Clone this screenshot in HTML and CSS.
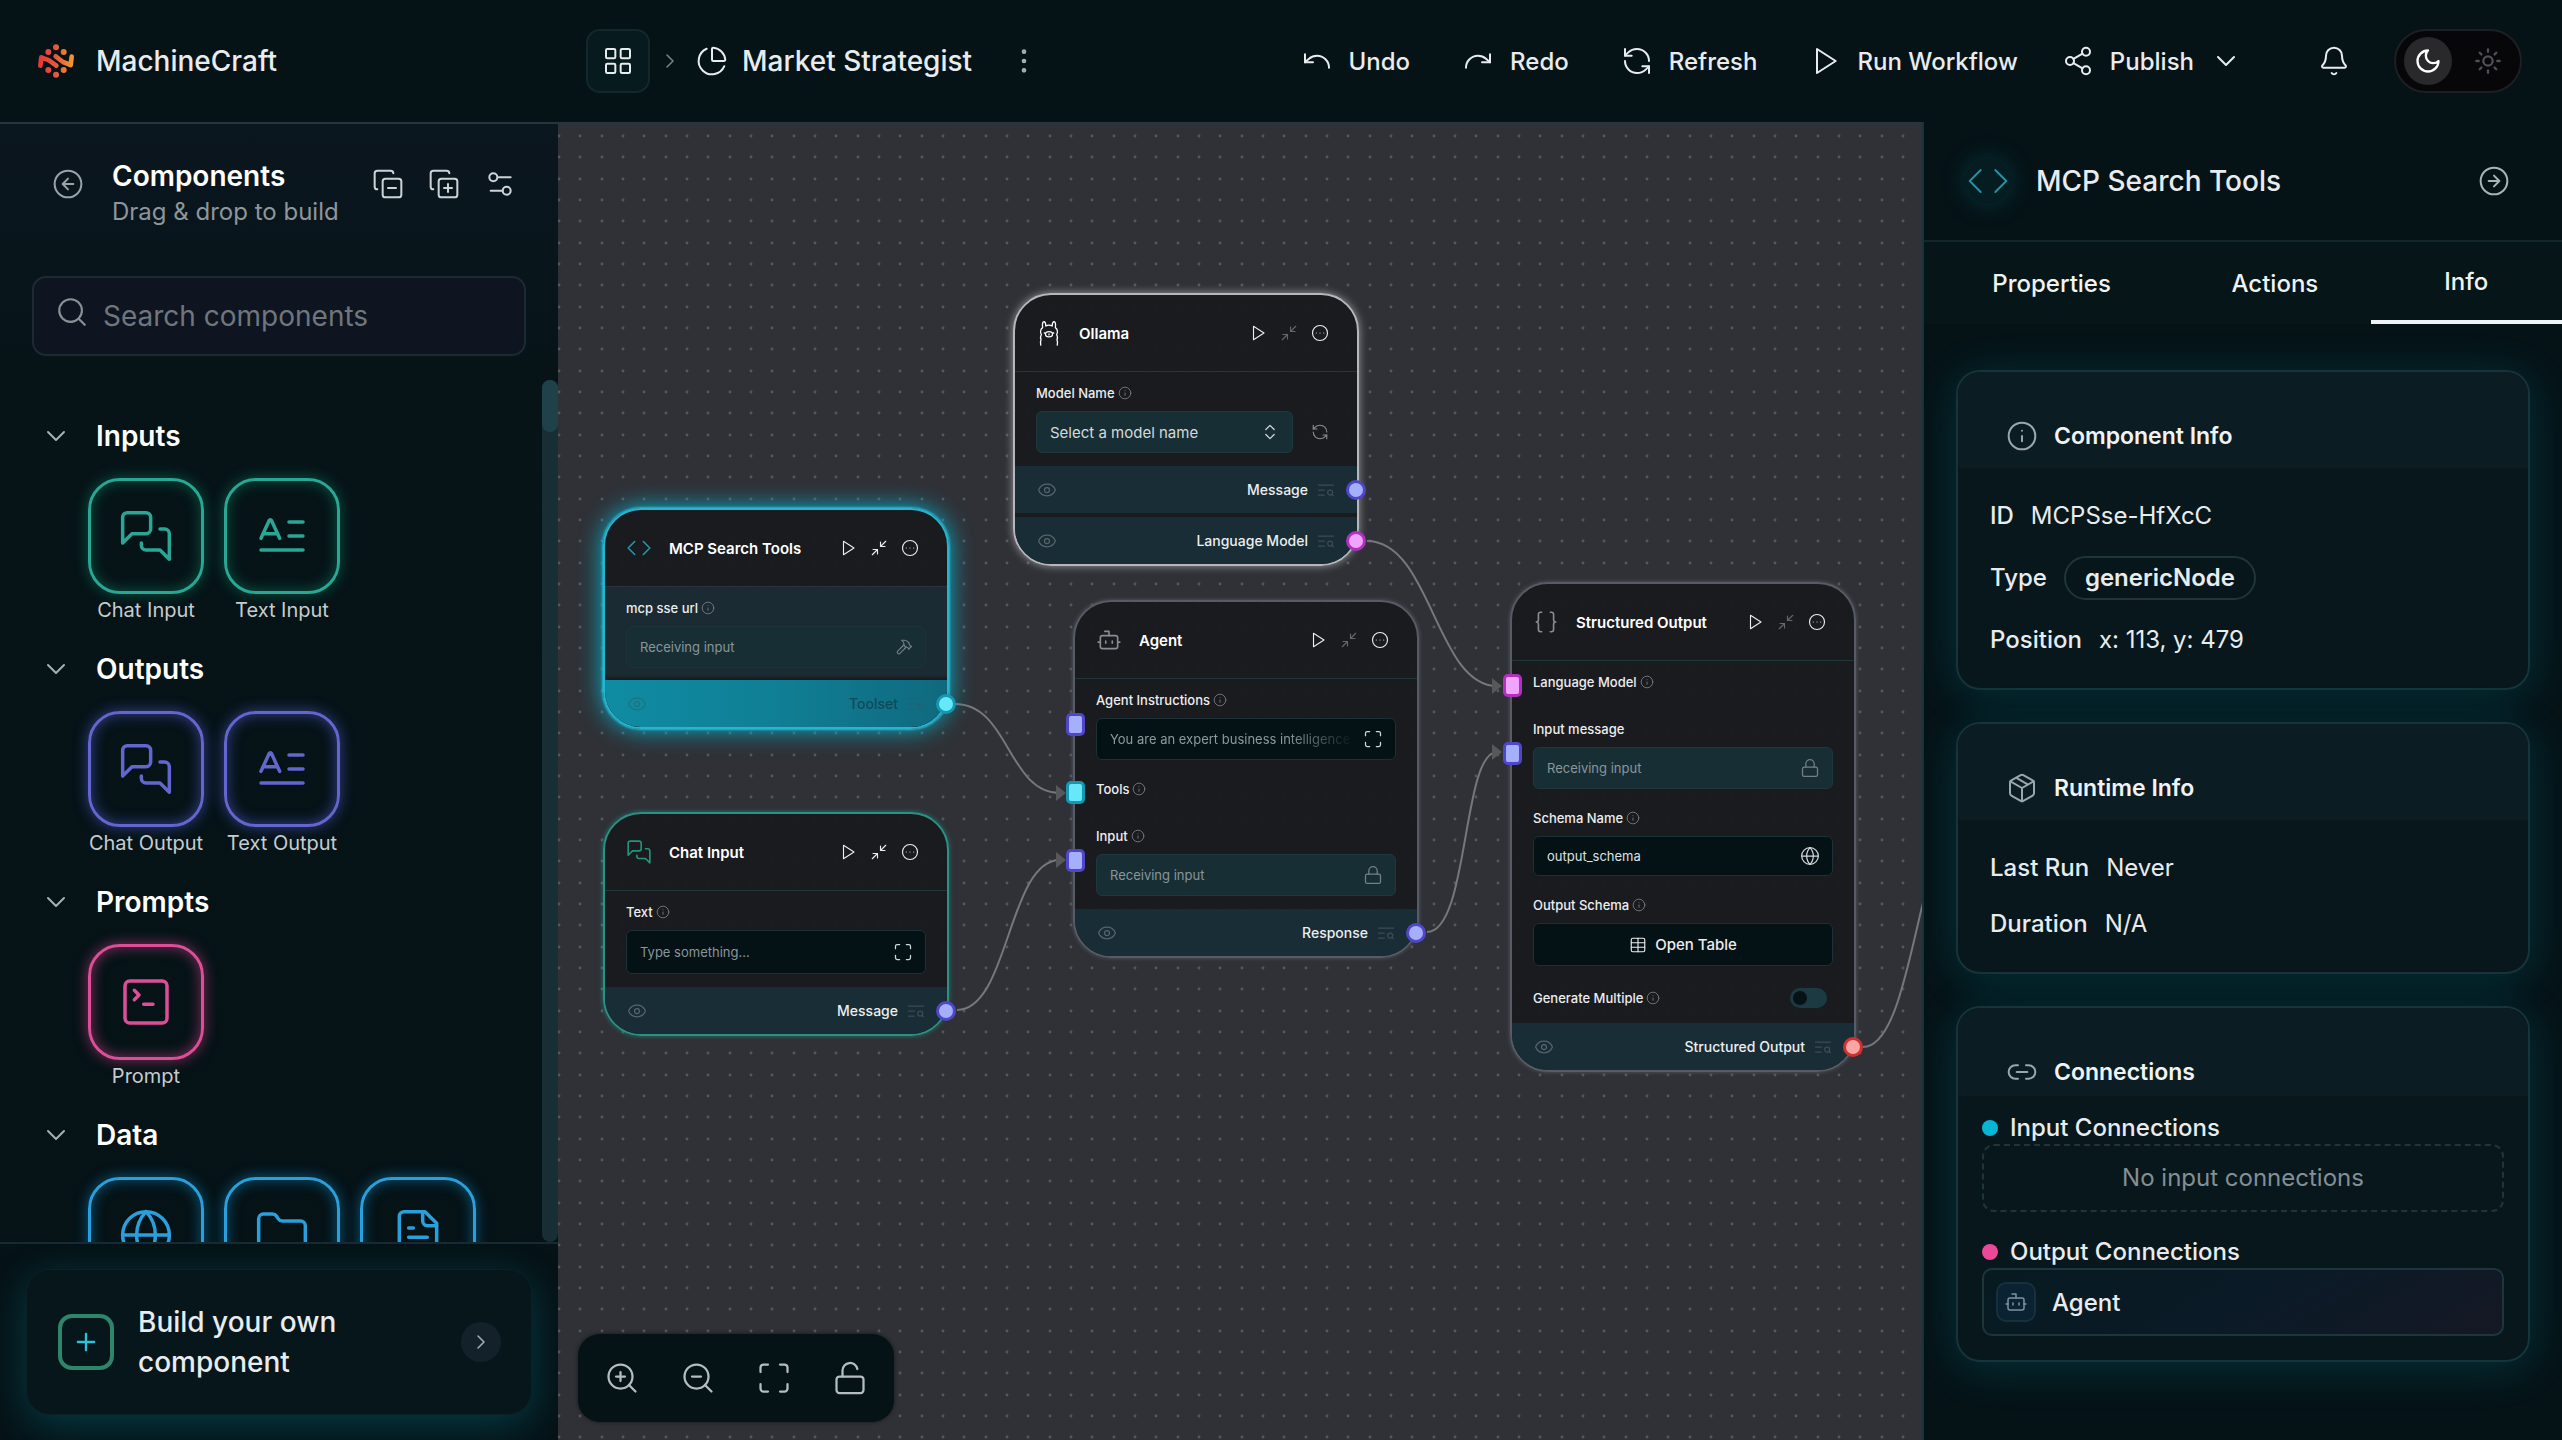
FILE: index.html
```html
<!DOCTYPE html>
<html lang="en">
<head>
<meta charset="utf-8">
<meta name="viewport" content="width=device-width, initial-scale=1">
<title>MachineCraft – Market Strategist</title>
<link rel="stylesheet" href="styles.css">
</head>
<body>
<svg class="sprite" aria-hidden="true">
  <symbol id="grid" viewBox="0 0 24 24"><rect x="3" y="3" width="7" height="7" rx="1"/><rect x="14" y="3" width="7" height="7" rx="1"/><rect x="14" y="14" width="7" height="7" rx="1"/><rect x="3" y="14" width="7" height="7" rx="1"/></symbol>
  <symbol id="chev-right" viewBox="0 0 24 24"><path d="m9 18 6-6-6-6"/></symbol>
  <symbol id="chev-down" viewBox="0 0 24 24"><path d="m6 9 6 6 6-6"/></symbol>
  <symbol id="pie" viewBox="0 0 24 24"><path d="M21 12c.552 0 1.005-.449.95-.998a10 10 0 0 0-8.953-8.951c-.55-.055-.998.398-.998.95v8a1 1 0 0 0 1 1z"/><path d="M21.21 15.89A10 10 0 1 1 8 2.83"/></symbol>
  <symbol id="dots-v" viewBox="0 0 24 24"><circle cx="12" cy="12" r="1"/><circle cx="12" cy="5" r="1"/><circle cx="12" cy="19" r="1"/></symbol>
  <symbol id="undo" viewBox="0 0 24 24"><path d="M3 7v6h6"/><path d="M21 17a9 9 0 0 0-9-9 9 9 0 0 0-6 2.3L3 13"/></symbol>
  <symbol id="redo" viewBox="0 0 24 24"><path d="M21 7v6h-6"/><path d="M3 17a9 9 0 0 1 9-9 9 9 0 0 1 6 2.3l3 2.7"/></symbol>
  <symbol id="refresh" viewBox="0 0 24 24"><path d="M21 12a9 9 0 0 0-9-9 9.75 9.75 0 0 0-6.74 2.74L3 8"/><path d="M3 3v5h5"/><path d="M3 12a9 9 0 0 0 9 9 9.75 9.75 0 0 0 6.74-2.74L21 16"/><path d="M16 16h5v5"/></symbol>
  <symbol id="play" viewBox="0 0 24 24"><path d="M6 3l14 9-14 9z"/></symbol>
  <symbol id="share" viewBox="0 0 24 24"><circle cx="18" cy="5" r="3"/><circle cx="6" cy="12" r="3"/><circle cx="18" cy="19" r="3"/><path d="M8.59 13.51l6.83 3.98M15.41 6.51l-6.82 3.98"/></symbol>
  <symbol id="bell" viewBox="0 0 24 24"><path d="M10.268 21a2 2 0 0 0 3.464 0"/><path d="M3.262 15.326A1 1 0 0 0 4 17h16a1 1 0 0 0 .74-1.673C19.41 13.956 18 12.499 18 8A6 6 0 0 0 6 8c0 4.499-1.411 5.956-2.738 7.326"/></symbol>
  <symbol id="moon" viewBox="0 0 24 24"><path d="M12 3a6 6 0 0 0 9 9 9 9 0 1 1-9-9Z"/></symbol>
  <symbol id="sun" viewBox="0 0 24 24"><circle cx="12" cy="12" r="4"/><path d="M12 2v2M12 20v2M4.93 4.93l1.41 1.41M17.66 17.66l1.41 1.41M2 12h2M20 12h2M6.34 17.66l-1.41 1.41M19.07 4.93l-1.41 1.41"/></symbol>
  <symbol id="circle-left" viewBox="0 0 24 24"><circle cx="12" cy="12" r="10"/><path d="M16 12H8M12 8l-4 4 4 4"/></symbol>
  <symbol id="circle-right" viewBox="0 0 24 24"><circle cx="12" cy="12" r="10"/><path d="M8 12h8M12 16l4-4-4-4"/></symbol>
  <symbol id="copy-minus" viewBox="0 0 24 24"><path d="M12 15h6"/><rect x="8" y="8" width="14" height="14" rx="2"/><path d="M4 16c-1.1 0-2-.9-2-2V4c0-1.1.9-2 2-2h10c1.1 0 2 .9 2 2"/></symbol>
  <symbol id="copy-plus" viewBox="0 0 24 24"><path d="M12 15h6M15 12v6"/><rect x="8" y="8" width="14" height="14" rx="2"/><path d="M4 16c-1.1 0-2-.9-2-2V4c0-1.1.9-2 2-2h10c1.1 0 2 .9 2 2"/></symbol>
  <symbol id="settings" viewBox="0 0 24 24"><path d="M20 7h-9M14 17H5"/><circle cx="17" cy="17" r="3"/><circle cx="7" cy="7" r="3"/></symbol>
  <symbol id="search" viewBox="0 0 24 24"><circle cx="11" cy="11" r="8"/><path d="m21 21-4.3-4.3"/></symbol>
  <symbol id="chat" viewBox="0 0 24 24"><path d="M14 9a2 2 0 0 1-2 2H6l-4 4V4a2 2 0 0 1 2-2h8a2 2 0 0 1 2 2z"/><path d="M18 9h2a2 2 0 0 1 2 2v11l-4-4h-6a2 2 0 0 1-2-2v-1"/></symbol>
  <symbol id="text" viewBox="0 0 24 24"><path d="M15 12h6M15 6h6"/><path d="m3 13 3.553-7.724a.5.5 0 0 1 .894 0L11 13"/><path d="M3 18h18M4 11h6"/></symbol>
  <symbol id="terminal" viewBox="0 0 24 24"><path d="m7 11 2-2-2-2M11 13h4"/><rect x="3" y="3" width="18" height="18" rx="2"/></symbol>
  <symbol id="globe" viewBox="0 0 24 24"><circle cx="12" cy="12" r="10"/><path d="M12 2a14.5 14.5 0 0 0 0 20 14.5 14.5 0 0 0 0-20M2 12h20"/></symbol>
  <symbol id="folder" viewBox="0 0 24 24"><path d="M20 20a2 2 0 0 0 2-2V8a2 2 0 0 0-2-2h-7.9a2 2 0 0 1-1.69-.9L9.6 3.9A2 2 0 0 0 7.93 3H4a2 2 0 0 0-2 2v13a2 2 0 0 0 2 2Z"/></symbol>
  <symbol id="file" viewBox="0 0 24 24"><path d="M15 2H6a2 2 0 0 0-2 2v16a2 2 0 0 0 2 2h12a2 2 0 0 0 2-2V7Z"/><path d="M14 2v4a2 2 0 0 0 2 2h4M10 9H8M16 13H8M16 17H8"/></symbol>
  <symbol id="plus" viewBox="0 0 24 24"><path d="M5 12h14M12 5v14"/></symbol>
  <symbol id="code" viewBox="0 0 24 24"><path d="m16 18 6-6-6-6M8 6l-6 6 6 6"/></symbol>
  <symbol id="shrink" viewBox="0 0 24 24"><path d="M4 14h6v6M20 10h-6V4M14 10l7-7M3 21l7-7"/></symbol>
  <symbol id="more" viewBox="0 0 24 24"><circle cx="12" cy="12" r="10"/><path d="M17 12h.01M12 12h.01M7 12h.01"/></symbol>
  <symbol id="info" viewBox="0 0 24 24"><circle cx="12" cy="12" r="10"/><path d="M12 16v-4M12 8h.01"/></symbol>
  <symbol id="corners" viewBox="0 0 24 24"><path d="M8 3H5a2 2 0 0 0-2 2v3M21 8V5a2 2 0 0 0-2-2h-3M3 16v3a2 2 0 0 0 2 2h3M16 21h3a2 2 0 0 0 2-2v-3"/></symbol>
  <symbol id="zoom-in" viewBox="0 0 24 24"><circle cx="11" cy="11" r="8"/><path d="m21 21-4.35-4.35M11 8v6M8 11h6"/></symbol>
  <symbol id="zoom-out" viewBox="0 0 24 24"><circle cx="11" cy="11" r="8"/><path d="m21 21-4.35-4.35M8 11h6"/></symbol>
  <symbol id="unlock" viewBox="0 0 24 24"><rect x="3" y="11" width="18" height="11" rx="2"/><path d="M7 11V7a5 5 0 0 1 9.9-1"/></symbol>
  <symbol id="lock" viewBox="0 0 24 24"><rect x="3" y="11" width="18" height="11" rx="2"/><path d="M7 11V7a5 5 0 0 1 10 0v4"/></symbol>
  <symbol id="hammer" viewBox="0 0 24 24"><path d="m15 12-8.373 8.373a1 1 0 1 1-3-3L12 9"/><path d="m18 15 4-4"/><path d="m21.5 11.5-1.914-1.914A2 2 0 0 1 19 8.172V7l-2.26-2.26a6 6 0 0 0-4.202-1.756L9 2.96l.92.82A6.18 6.18 0 0 1 12 8.4V10l2 2h1.172a2 2 0 0 1 1.414.586L18.5 14.5"/></symbol>
  <symbol id="eye" viewBox="0 0 24 24"><path d="M2.062 12.348a1 1 0 0 1 0-.696 10.75 10.75 0 0 1 19.876 0 1 1 0 0 1 0 .696 10.75 10.75 0 0 1-19.876 0"/><circle cx="12" cy="12" r="3"/></symbol>
  <symbol id="inspect" viewBox="0 0 24 24"><path d="M21 6H3M10 12H3M10 18H3"/><circle cx="17" cy="15" r="3"/><path d="m21 19-1.9-1.9"/></symbol>
  <symbol id="bot" viewBox="0 0 24 24"><path d="M12 8V4H8"/><rect x="4" y="8" width="16" height="12" rx="2"/><path d="M2 14h2M20 14h2M15 13v2M9 13v2"/></symbol>
  <symbol id="braces" viewBox="0 0 24 24"><path d="M8 3H7a2 2 0 0 0-2 2v5a2 2 0 0 1-2 2 2 2 0 0 1 2 2v5c0 1.1.9 2 2 2h1"/><path d="M16 21h1a2 2 0 0 0 2-2v-5c0-1.1.9-2 2-2a2 2 0 0 1-2-2V5a2 2 0 0 0-2-2h-1"/></symbol>
  <symbol id="updown" viewBox="0 0 24 24"><path d="m7 15 5 5 5-5M7 9l5-5 5 5"/></symbol>
  <symbol id="table" viewBox="0 0 24 24"><path d="M12 3v18"/><rect x="3" y="3" width="18" height="18" rx="2"/><path d="M3 9h18M3 15h18"/></symbol>
  <symbol id="package" viewBox="0 0 24 24"><path d="M11 21.73a2 2 0 0 0 2 0l7-4A2 2 0 0 0 21 16V8a2 2 0 0 0-1-1.73l-7-4a2 2 0 0 0-2 0l-7 4A2 2 0 0 0 3 8v8a2 2 0 0 0 1 1.73z"/><path d="M12 22V12M3.3 7l8.7 5 8.7-5M7.5 4.27l9 5.15"/></symbol>
  <symbol id="link" viewBox="0 0 24 24"><path d="M9 17H7A5 5 0 0 1 7 7h2M15 7h2a5 5 0 1 1 0 10h-2M8 12h8"/></symbol>
  <symbol id="llama" viewBox="30 26 64 82"><path d="M42 50C40 36 43 30 47 31c4 2 5 8 5 14M82 50c2-14-1-20-5-19-4 2-5 8-5 14M52 45c5-3 15-3 20 0M42 50c-8 5-8 16-4 22-4 8-4 12-1 16-3 6-2 12-1 17M82 50c8 5 8 16 4 22 4 8 4 12 1 16 3 6 2 12 1 17M47 67h2M75 67h2M62 70v3"/><ellipse cx="62" cy="71" rx="11" ry="8"/></symbol>
</svg>

<div class="app">
  <header class="topbar">
    <a class="brand" href="#">
      <svg class="brand-mark" viewBox="22 14 112 108" aria-hidden="true">
        <defs><linearGradient id="flame" gradientUnits="userSpaceOnUse" x1="24" y1="0" x2="132" y2="0"><stop offset="0" stop-color="#e8333a"/><stop offset=".5" stop-color="#e8573a"/><stop offset="1" stop-color="#f59a2c"/></linearGradient></defs>
        <g fill="url(#flame)"><circle cx="78" cy="27" r="9"/><circle cx="55" cy="41" r="9"/><circle cx="101" cy="41" r="9"/><circle cx="55" cy="95" r="9"/><circle cx="101" cy="95" r="9"/><circle cx="78" cy="109" r="9"/></g>
        <path d="M31 82L34 57L57 66L79 82M77 54L99 71L122 80L125 55" fill="none" stroke="url(#flame)" stroke-width="14" stroke-linecap="round" stroke-linejoin="round"/>
      </svg>
      <span>MachineCraft</span>
    </a>
    <nav class="crumbs" aria-label="Breadcrumb">
      <button class="home-btn" aria-label="All flows"><svg class="i i32"><use href="#grid"/></svg></button>
      <svg class="i i24 dim"><use href="#chev-right"/></svg>
      <svg class="i i32 crumb-icon"><use href="#pie"/></svg>
      <h1 class="flow-title">Market Strategist</h1>
      <button class="plain" aria-label="Flow menu"><svg class="i i32"><use href="#dots-v"/></svg></button>
    </nav>
    <div class="actions">
      <button class="action"><svg class="i i32"><use href="#undo"/></svg>Undo</button>
      <button class="action"><svg class="i i32"><use href="#redo"/></svg>Redo</button>
      <button class="action"><svg class="i i32"><use href="#refresh"/></svg>Refresh</button>
      <button class="action run"><svg class="i i32"><use href="#play"/></svg>Run Workflow</button>
      <button class="action"><svg class="i i32"><use href="#share"/></svg>Publish<svg class="i i32"><use href="#chev-down"/></svg></button>
    </div>
    <button class="plain bell" aria-label="Notifications"><svg class="i i32"><use href="#bell"/></svg></button>
    <button class="theme" role="switch" aria-checked="true" aria-label="Dark theme">
      <span class="theme-on"><svg class="i i28"><use href="#moon"/></svg></span>
      <span class="theme-off"><svg class="i i28"><use href="#sun"/></svg></span>
    </button>
  </header>

  <main class="workspace">
    <aside class="sidebar">
      <div class="side-head">
        <button class="plain muted" aria-label="Collapse"><svg class="i i32"><use href="#circle-left"/></svg></button>
        <div class="side-title"><h2>Components</h2><p>Drag &amp; drop to build</p></div>
        <div class="side-tools">
          <button class="plain" aria-label="Collapse all"><svg class="i i32"><use href="#copy-minus"/></svg></button>
          <button class="plain" aria-label="Expand all"><svg class="i i32"><use href="#copy-plus"/></svg></button>
          <button class="plain" aria-label="Settings"><svg class="i i32"><use href="#settings"/></svg></button>
        </div>
      </div>
      <label class="search"><svg class="i i34"><use href="#search"/></svg><input type="search" placeholder="Search components" aria-label="Search components"></label>
      <div class="side-scroll">
        <div class="groups">
          <section class="group green">
            <button class="group-head"><svg class="i i32"><use href="#chev-down"/></svg>Inputs</button>
            <div class="tiles">
              <button class="tile"><span class="tile-box"><svg class="i i56"><use href="#chat"/></svg></span>Chat Input</button>
              <button class="tile"><span class="tile-box"><svg class="i i56"><use href="#text"/></svg></span>Text Input</button>
            </div>
          </section>
          <section class="group indigo">
            <button class="group-head"><svg class="i i32"><use href="#chev-down"/></svg>Outputs</button>
            <div class="tiles">
              <button class="tile"><span class="tile-box"><svg class="i i56"><use href="#chat"/></svg></span>Chat Output</button>
              <button class="tile"><span class="tile-box"><svg class="i i56"><use href="#text"/></svg></span>Text Output</button>
            </div>
          </section>
          <section class="group pink">
            <button class="group-head"><svg class="i i32"><use href="#chev-down"/></svg>Prompts</button>
            <div class="tiles">
              <button class="tile"><span class="tile-box"><svg class="i i56"><use href="#terminal"/></svg></span>Prompt</button>
            </div>
          </section>
          <section class="group blue">
            <button class="group-head"><svg class="i i32"><use href="#chev-down"/></svg>Data</button>
            <div class="tiles">
              <button class="tile" aria-label="Web"><span class="tile-box"><svg class="i i56"><use href="#globe"/></svg></span></button>
              <button class="tile" aria-label="Folder"><span class="tile-box"><svg class="i i56"><use href="#folder"/></svg></span></button>
              <button class="tile" aria-label="File"><span class="tile-box"><svg class="i i56"><use href="#file"/></svg></span></button>
            </div>
          </section>
        </div>
        <div class="track"><div class="thumb"></div></div>
      </div>
      <div class="side-foot">
        <button class="build">
          <span class="build-plus"><svg class="i i28"><use href="#plus"/></svg></span>
          <span class="build-text">Build your own component</span>
          <span class="build-go"><svg class="i i24"><use href="#chev-right"/></svg></span>
        </button>
      </div>
    </aside>

    <section class="canvas" aria-label="Flow canvas">
      <svg class="edges" aria-hidden="true">
        <defs>
          <pattern id="dots" width="64" height="64" patternUnits="userSpaceOnUse" x="-10" y="1">
            <g fill="#55595d"><circle cx="11" cy="11" r="1.4"/><circle cx="32" cy="11" r="1.4"/><circle cx="54" cy="11" r="1.4"/><circle cx="11" cy="32" r="1.4"/><circle cx="32" cy="32" r="1.4"/><circle cx="54" cy="32" r="1.4"/><circle cx="11" cy="54" r="1.4"/><circle cx="32" cy="54" r="1.4"/><circle cx="54" cy="54" r="1.4"/></g>
          </pattern>
        </defs>
        <rect width="100%" height="100%" fill="url(#dots)"/>
        <g fill="none" stroke="#77777a" stroke-width="2">
          <path d="M397 580C451 580 450 669 502 669"/>
          <path d="M399 886C451 886 450 736 502 736"/>
          <path d="M809 417C873 417 878 562 939 562"/>
          <path d="M869 808C911 808 904 628 939 628"/>
          <path d="M1305 923C1358 923 1360 686 1412 686"/>
        </g>
        <g fill="#58585a"><path d="M498 661l10 8-10 8zM498 728l10 8-10 8zM934 554l10 8-10 8zM934 620l10 8-10 8z"/></g>
      </svg>

      <article class="node selected" style="left:45px;top:384px">
        <header class="node-head"><svg class="i i26 tint-cyan"><use href="#code"/></svg><h3>MCP Search Tools</h3><button class="plain" aria-label="Run"><svg class="i i18"><use href="#play"/></svg></button><button class="plain" aria-label="Minimize"><svg class="i i18"><use href="#shrink"/></svg></button><button class="plain" aria-label="More"><svg class="i i18"><use href="#more"/></svg></button></header>
        <div class="node-body tinted">
          <div class="param"><label for="sse">mcp sse url <svg class="i i14"><use href="#info"/></svg></label>
            <div class="field ghost"><input id="sse" placeholder="Receiving input"><svg class="i i18"><use href="#hammer"/></svg></div></div>
        </div>
        <div class="out out-cyan"><svg class="i i20"><use href="#eye"/></svg><span>Toolset</span><svg class="i i20"><use href="#inspect"/></svg><i class="port port-out cyan"></i></div>
      </article>

      <article class="node chat-node" style="left:45px;top:688px">
        <header class="node-head"><svg class="i i26 tint-green"><use href="#chat"/></svg><h3>Chat Input</h3><button class="plain" aria-label="Run"><svg class="i i18"><use href="#play"/></svg></button><button class="plain" aria-label="Minimize"><svg class="i i18"><use href="#shrink"/></svg></button><button class="plain" aria-label="More"><svg class="i i18"><use href="#more"/></svg></button></header>
        <div class="node-body">
          <div class="param"><label for="txt">Text <svg class="i i14"><use href="#info"/></svg></label>
            <div class="field dark tall"><input id="txt" placeholder="Type something..."><svg class="i i20 bright"><use href="#corners"/></svg></div></div>
        </div>
        <div class="out"><svg class="i i20"><use href="#eye"/></svg><span>Message</span><svg class="i i20"><use href="#inspect"/></svg><i class="port port-out indigo-port"></i></div>
      </article>

      <article class="node ollama" style="left:455px;top:169px">
        <header class="node-head"><svg class="i i26 llama"><use href="#llama"/></svg><h3>Ollama</h3><button class="plain" aria-label="Run"><svg class="i i18"><use href="#play"/></svg></button><button class="plain off" aria-label="Minimize"><svg class="i i18"><use href="#shrink"/></svg></button><button class="plain" aria-label="More"><svg class="i i18"><use href="#more"/></svg></button></header>
        <div class="node-body">
          <div class="param"><label for="model">Model Name <svg class="i i14"><use href="#info"/></svg></label>
            <div class="model-row"><div class="field pick"><select id="model"><option>Select a model name</option></select><svg class="i i20 bright"><use href="#updown"/></svg></div><button class="plain muted" aria-label="Refresh models"><svg class="i i18"><use href="#refresh"/></svg></button></div></div>
        </div>
        <div class="out out-gap"><svg class="i i20"><use href="#eye"/></svg><span>Message</span><svg class="i i20"><use href="#inspect"/></svg><i class="port port-out indigo-port"></i></div>
        <div class="out"><svg class="i i20"><use href="#eye"/></svg><span>Language Model</span><svg class="i i20"><use href="#inspect"/></svg><i class="port port-out magenta"></i></div>
      </article>

      <article class="node" style="left:515px;top:476px">
        <header class="node-head"><svg class="i i26 muted"><use href="#bot"/></svg><h3>Agent</h3><button class="plain" aria-label="Run"><svg class="i i18"><use href="#play"/></svg></button><button class="plain off" aria-label="Minimize"><svg class="i i18"><use href="#shrink"/></svg></button><button class="plain" aria-label="More"><svg class="i i18"><use href="#more"/></svg></button></header>
        <div class="node-body">
          <div class="param"><label for="instr">Agent Instructions <svg class="i i14"><use href="#info"/></svg></label>
            <div class="field dark"><input id="instr" class="fade" value="You are an expert business intelligence research agent"><svg class="i i20 bright"><use href="#corners"/></svg></div><i class="port port-in indigo-port"></i></div>
          <div class="param"><span class="lbl">Tools <svg class="i i14"><use href="#info"/></svg></span><i class="port port-in cyan"></i></div>
          <div class="param"><label for="ain">Input <svg class="i i14"><use href="#info"/></svg></label>
            <div class="field"><input id="ain" placeholder="Receiving input"><svg class="i i20"><use href="#lock"/></svg></div><i class="port port-in indigo-port"></i></div>
        </div>
        <div class="out"><svg class="i i20"><use href="#eye"/></svg><span>Response</span><svg class="i i20"><use href="#inspect"/></svg><i class="port port-out indigo-port"></i></div>
      </article>

      <article class="node" style="left:952px;top:458px">
        <header class="node-head"><svg class="i i26 muted"><use href="#braces"/></svg><h3>Structured Output</h3><button class="plain" aria-label="Run"><svg class="i i18"><use href="#play"/></svg></button><button class="plain off" aria-label="Minimize"><svg class="i i18"><use href="#shrink"/></svg></button><button class="plain" aria-label="More"><svg class="i i18"><use href="#more"/></svg></button></header>
        <div class="node-body">
          <div class="param"><span class="lbl">Language Model <svg class="i i14"><use href="#info"/></svg></span><i class="port port-in magenta"></i></div>
          <div class="param"><label for="imsg">Input message</label>
            <div class="field"><input id="imsg" placeholder="Receiving input"><svg class="i i20"><use href="#lock"/></svg></div><i class="port port-in indigo-port"></i></div>
          <div class="param"><label for="sname">Schema Name <svg class="i i14"><use href="#info"/></svg></label>
            <div class="field dark short"><input id="sname" value="output_schema"><svg class="i i20 bright"><use href="#globe"/></svg></div></div>
          <div class="param"><span class="lbl">Output Schema <svg class="i i14"><use href="#info"/></svg></span>
            <button class="open-table"><svg class="i i18"><use href="#table"/></svg>Open Table</button></div>
          <div class="param row"><label for="multi">Generate Multiple <svg class="i i14"><use href="#info"/></svg></label><input class="switch" id="multi" type="checkbox"></div>
        </div>
        <div class="out"><svg class="i i20"><use href="#eye"/></svg><span>Structured Output</span><svg class="i i20"><use href="#inspect"/></svg><i class="port port-out red"></i></div>
      </article>

      <div class="canvas-tools">
        <button class="plain" aria-label="Zoom in"><svg class="i i36"><use href="#zoom-in"/></svg></button>
        <button class="plain" aria-label="Zoom out"><svg class="i i36"><use href="#zoom-out"/></svg></button>
        <button class="plain" aria-label="Fit view"><svg class="i i36"><use href="#corners"/></svg></button>
        <button class="plain" aria-label="Unlock"><svg class="i i36"><use href="#unlock"/></svg></button>
      </div>
    </section>

    <aside class="inspector">
      <div class="insp-head">
        <span class="insp-icon"><svg class="i i44"><use href="#code"/></svg></span>
        <h2>MCP Search Tools</h2>
        <button class="plain" aria-label="Close panel"><svg class="i i32"><use href="#circle-right"/></svg></button>
      </div>
      <div class="tabs" role="tablist">
        <button role="tab" aria-selected="false">Properties</button>
        <button role="tab" aria-selected="false">Actions</button>
        <button role="tab" aria-selected="true">Info</button>
      </div>
      <div class="cards">
        <section class="card">
          <h3><svg class="i i32"><use href="#info"/></svg>Component Info</h3>
          <dl>
            <div><dt>ID</dt><dd>MCPSse-HfXcC</dd></div>
            <div><dt>Type</dt><dd class="badge">genericNode</dd></div>
            <div><dt>Position</dt><dd>x: 113, y: 479</dd></div>
          </dl>
        </section>
        <section class="card">
          <h3><svg class="i i32"><use href="#package"/></svg>Runtime Info</h3>
          <dl>
            <div><dt>Last Run</dt><dd>Never</dd></div>
            <div><dt>Duration</dt><dd>N/A</dd></div>
          </dl>
        </section>
        <section class="card links">
          <h3><svg class="i i32"><use href="#link"/></svg>Connections</h3>
          <div class="conns">
            <div><h4 class="in">Input Connections</h4><p class="empty">No input connections</p></div>
            <div><h4 class="outc">Output Connections</h4><a class="conn" href="#"><span class="conn-icon"><svg class="i i24"><use href="#bot"/></svg></span>Agent</a></div>
          </div>
        </section>
      </div>
    </aside>
  </main>
</div>
</body>
</html>
```
FILE: styles.css
```css
* { box-sizing: border-box; }
body { margin: 0; background: #051216; color: #e8ecee; font-family: Inter, "Liberation Sans", sans-serif; font-size: 24px; }
h1, h2, h3, h4, p, dl, dd { margin: 0; font-weight: inherit; font-size: inherit; }
button, input, select { font: inherit; color: inherit; }
button { margin: 0; padding: 0; border: 0; background: none; cursor: pointer; }
input { min-width: 0; border: 0; background: none; outline: 0; padding: 0; }
a { color: inherit; text-decoration: none; }
.sprite { position: absolute; width: 0; height: 0; overflow: hidden; }

.i { display: block; flex: none; fill: none; stroke: currentColor; stroke-width: 1.5; stroke-linecap: round; stroke-linejoin: round; }
.i14 { width: 14px; height: 14px; }
.i18 { width: 18px; height: 18px; }
.i20 { width: 20px; height: 20px; }
.i24 { width: 24px; height: 24px; }
.i26 { width: 26px; height: 26px; }
.i28 { width: 28px; height: 28px; stroke-width: 2; }
.i32 { width: 32px; height: 32px; }
.i34 { width: 34px; height: 34px; }
.i36 { width: 36px; height: 36px; }
.i44 { width: 44px; height: 44px; stroke-width: 1; }
.i56 { width: 56px; height: 56px; }
.plain { display: block; }
.dim { color: #7b8589; }
.muted { color: #878d95; }

.app { display: flex; flex-direction: column; height: 100vh; overflow: hidden; }

/* top bar */
.topbar { display: flex; align-items: center; flex: none; height: 124px; padding: 0 40px 0 37px; border-bottom: 2px solid #25363f; background: #051317; font-weight: 500; }
.brand { display: flex; align-items: center; flex: none; gap: 21px; width: 549px; font-size: 28px; }
.brand-mark { width: 38px; height: 36px; }
.crumbs { display: flex; align-items: center; }
.home-btn { display: grid; place-items: center; width: 64px; height: 64px; margin-right: 8px; border: 2px solid #14282c; border-radius: 14px; background: #071a1e; }
.crumb-icon { margin: 0 14px; }
.flow-title { margin-right: 36px; font-size: 28px; white-space: nowrap; }
.crumbs .plain { color: #aab1b4; }
.actions { display: flex; gap: 52px; margin-left: auto; }
.action { display: flex; align-items: center; gap: 16px; font-weight: 500; white-space: nowrap; }
.run { margin-right: -8px; }
.bell { margin: 0 44px 0 76px; }
.theme { display: flex; align-items: center; justify-content: space-between; width: 128px; height: 64px; padding: 0 8px; border: 2px solid #1d1f22; border-radius: 32px; background: #070709; }
.theme span { display: grid; place-items: center; width: 48px; height: 48px; border-radius: 50%; }
.theme-on { background: #29292c; color: #fff; }
.theme-off { color: #505054; }

.workspace { display: flex; flex: 1; min-height: 0; }

/* component library */
.sidebar { display: flex; flex-direction: column; flex: none; width: 558px; background: linear-gradient(#0b161f, #061418 260px, #051216); }
.side-head { display: flex; align-items: flex-start; padding: 34px 42px 48px 52px; }
.side-head > .muted { margin-top: 10px; color: #9aa3a8; }
.side-title { flex: 1; margin-left: 28px; }
.side-title h2 { font-size: 28px; line-height: 36px; font-weight: 600; color: #fff; }
.side-title p { font-size: 24px; line-height: 36px; color: #8d969b; }
.side-tools { display: flex; gap: 24px; margin-top: 10px; color: #cdd4d7; }
.search { display: flex; align-items: center; flex: none; gap: 14px; height: 80px; margin: -2px 32px 24px; padding: 0 21px; border: 2px solid #1d2a34; border-radius: 14px; background: #0e1520; color: #8a9197; }
.search .i { margin-bottom: 8px; }
.search input { flex: 1; font-size: 28px; color: #fff; }
.search input::placeholder { color: #70767e; opacity: 1; }
.side-scroll { display: flex; flex: 1; min-height: 0; }
.groups { flex: 1; overflow: hidden; padding-top: 36px; }
.track { flex: none; width: 16px; border-radius: 8px; background: #162e34; }
.thumb { height: 52px; border-radius: 8px; background: #1f424a; }
.group { margin-bottom: 27px; }
.group-head { display: flex; align-items: center; gap: 24px; margin-left: 40px; line-height: 40px; font-size: 28px; font-weight: 600; color: #fff; }
.group-head .i { color: #a7b0b3; }
.tiles { display: flex; gap: 20px; margin: 22px 0 0 88px; }
.tile { display: flex; flex-direction: column; align-items: center; gap: 4px; width: 116px; font-size: 20px; line-height: 24px; color: #c5cccf; white-space: nowrap; }
.tile-box { display: grid; place-items: center; width: 116px; height: 116px; border: 3px solid var(--c); border-radius: 32px; color: var(--c); box-shadow: 0 0 14px var(--g), inset 0 0 14px var(--g); }
.green { --c: #2aa794; --g: #10b98166; }
.indigo { --c: #6366cf; --g: #6366f188; }
.pink { --c: #dc4f98; --g: #ec489988; }
.blue { --c: #2a9fdb; --g: #0ea5e977; }
.side-foot { position: relative; flex: none; padding: 25px 26px; overflow: hidden; border-top: 2px solid #162b31; }
.build { display: flex; align-items: center; width: 100%; height: 146px; padding: 0 30px 0 31px; border: 1px solid #0c2025; border-radius: 24px; background: #06161b; box-shadow: 0 10px 40px #06b6d440; text-align: left; }
.build-plus { display: grid; place-items: center; flex: none; width: 56px; height: 56px; border: 4px solid #2d856a; border-radius: 14px; color: #2cc3d8; }
.build-text { flex: 1; margin: 0 60px 0 24px; font-size: 28px; line-height: 40px; font-weight: 500; }
.build-go { display: grid; place-items: center; width: 40px; height: 40px; border-radius: 50%; background: #13222a; color: #a7b0b3; }

/* canvas */
.canvas { position: relative; flex: 1; min-width: 0; overflow: hidden; background: #2f3136; }
.edges { position: absolute; inset: 0; width: 100%; height: 100%; }
.canvas-tools { position: absolute; left: 20px; bottom: 18px; display: flex; gap: 40px; padding: 26px; border-radius: 22px; background: #051216; color: #b6bdbf; box-shadow: 0 0 4px #0008; }

.node { position: absolute; width: 346px; border: 2px solid #565b65; border-radius: 38px; background: #191a1ff2; box-shadow: 0 0 4px #565b65; font-size: 13px; font-weight: 500; color: #eceef0; }
.node.selected { border-color: #27b4cf; box-shadow: 0 0 2px 1px #22b8d4, 0 0 24px #06b6d4; }
.node.chat-node { border-color: #2a9184; box-shadow: 0 0 5px #14b8a688; }
.node.ollama { border-color: #b5b7bc; box-shadow: 0 0 8px #d0d2d6aa; }
.node-head { display: flex; align-items: center; gap: 13px; height: 77px; padding: 0 28px 0 21px; border-bottom: 1px solid #22363b; }
.node-head h3 { flex: 1; margin-left: 4px; font-size: 15px; font-weight: 600; color: #fff; white-space: nowrap; }
.node-head .off { color: #65676c; }
.tint-cyan { color: #2098ae; }
.tint-green { color: #26937f; }
.llama { stroke-width: 4; color: #fff; }
.node-body { display: grid; gap: 20px; padding: 12px 21px 13px; }
.tinted { padding-bottom: 12px; background: linear-gradient(#1b2d35e0 88px, #14181ce0); }
.param { position: relative; }
.param label, .lbl { display: flex; align-items: center; gap: 3px; height: 27px; padding-bottom: 9px; line-height: 18px; white-space: nowrap; }
.param label .i, .lbl .i { color: #777c82; }
.field { display: flex; align-items: center; gap: 8px; height: 42px; padding: 0 12px 0 13px; border: 1px solid #1d393f; border-radius: 6px; background: #182e35; color: #72808a; }
.field input { flex: 1; font-weight: 400; color: #c5cbce; }
.field input::placeholder { color: #88969b; opacity: 1; }
.field.dark { background: #041115; border-color: #1c3035; }
.field.short { height: 40px; }
.field.tall { height: 44px; }
.field.short input { color: #dde1e3; }
.field.ghost { background: #182e35; border-color: #1d3339; }
.field .bright { color: #d3d8da; }
.field .fade { color: #8f999d; -webkit-mask-image: linear-gradient(90deg, #000 72%, transparent); mask-image: linear-gradient(90deg, #000 72%, transparent); }
.model-row { display: flex; align-items: center; gap: 18px; }
.pick { width: 257px; }
.pick select { flex: 1; border: 0; outline: 0; appearance: none; background: none; font-size: 15px; font-weight: 400; color: #d3dadc; }
.open-table { display: flex; align-items: center; justify-content: center; gap: 8px; width: 100%; height: 43px; border: 1px solid #1c3035; border-radius: 6px; background: #041115; font-size: 15px; }
.param.row { display: flex; align-items: center; justify-content: space-between; height: 24px; padding-right: 6px; }
.param.row label { height: 18px; padding: 0; }
.switch { flex: none; width: 37px; height: 20px; margin: 0; padding: 3px; appearance: none; border-radius: 10px; background: #1c3a42; }
.switch::before { content: ""; display: block; width: 14px; height: 14px; border-radius: 50%; background: #051216; }
.out { position: relative; display: flex; align-items: center; height: 47px; padding: 0 21px 0 22px; background: #182d35; color: #56656b; }
.out span { margin: 0 8px 0 auto; font-size: 14px; color: #eceef0; }
.out .i:last-of-type { color: #3d4c53; }
.out-gap { margin-bottom: 4px; }
.out:last-child { border-radius: 0 0 36px 36px; }
.out-cyan { background: linear-gradient(90deg, #0f8ca3, #0f7f95 50%, #10697e); color: #22727f; }
.out-cyan span { color: #10495a; }
.out-cyan .i:last-of-type { color: #1f6478; }
.port { position: absolute; border: 3px solid #4f46c8; background: #a5b0fc; }
.port-out { right: -9px; top: 14px; width: 20px; height: 20px; border-radius: 50%; }
.port-in { left: -30px; top: 22px; width: 19px; height: 23px; border-radius: 5px; }
.param > .lbl:only-of-type + .port-in { top: 1px; }
.param > label ~ .port-in { top: 22px; }
.cyan { border-color: #1597b0; background: #67e8f9; }
.magenta { border-color: #b32fc0; background: #f0a4fb; }
.red { border-color: #d13030; background: #fca5a5; }

/* inspector */
.inspector { position: relative; flex: none; width: 640px; margin-top: -2px; overflow: hidden; border-left: 2px solid #17343b; background: #051317; }
.insp-head { display: flex; align-items: center; height: 120px; padding: 0 52px 0 42px; border-bottom: 2px solid #11272c; color: #aab3b6; }
.insp-icon { color: #2493a6; border-radius: 50%; background: #062a3066; box-shadow: 0 0 18px 4px #062a30; }
.insp-head h2 { flex: 1; margin-left: 26px; font-size: 28px; font-weight: 500; color: #e8ecee; }
.tabs { display: grid; grid-template-columns: 4fr 3fr 3fr; height: 82px; background: #061518; }
.tabs button { font-weight: 500; color: #f0f3f4; border-bottom: 0 solid #eef4f5; }
.tabs button[aria-selected="true"] { border-bottom-width: 4px; }
.cards { display: grid; gap: 32px; padding: 46px 32px 32px; }
.card { border: 2px solid #17343a; border-radius: 24px; background: #08171c; box-shadow: 0 6px 44px #06b6d430; }
.card h3 { display: flex; align-items: center; gap: 16px; height: 96px; padding: 32px 48px 0; border-radius: 22px 22px 0 0; background: #0c1c23; font-size: 23px; font-weight: 600; color: #f0f3f4; }
.card h3 .i { color: #9aa7ac; }
.card dl { display: grid; gap: 24px; padding: 32px; }
.card dl div { display: flex; align-items: center; gap: 17px; line-height: 32px; }
.card dt { font-weight: 500; }
.badge { padding: 4px 19px; border: 2px solid #1f353b; border-radius: 22px; background: #06161b; font-weight: 600; }
.links h3 { height: 88px; padding-top: 40px; }
.conns { display: grid; gap: 24px; padding: 16px 24px 24px; }
.conns h4 { display: flex; align-items: center; gap: 12px; line-height: 32px; font-weight: 500; }
.conns h4::before { content: ""; width: 16px; height: 16px; border-radius: 50%; background: #06b6d4; }
.conns .outc::before { background: #ec4899; }
.empty { height: 68px; border: 2px dashed #1f353b; border-radius: 12px; text-align: center; line-height: 64px; color: #838f94; }
.conn { display: flex; align-items: center; gap: 16px; height: 68px; padding: 0 12px; border: 2px solid #1c363c; border-radius: 10px; background: linear-gradient(150deg, #071a20, #0b1a27 50%, #151824); font-weight: 500; }
.conn-icon { display: grid; place-items: center; width: 40px; height: 40px; border: 2px solid #16303c; border-radius: 10px; background: #0b2233; color: #7f93a0; }
```
